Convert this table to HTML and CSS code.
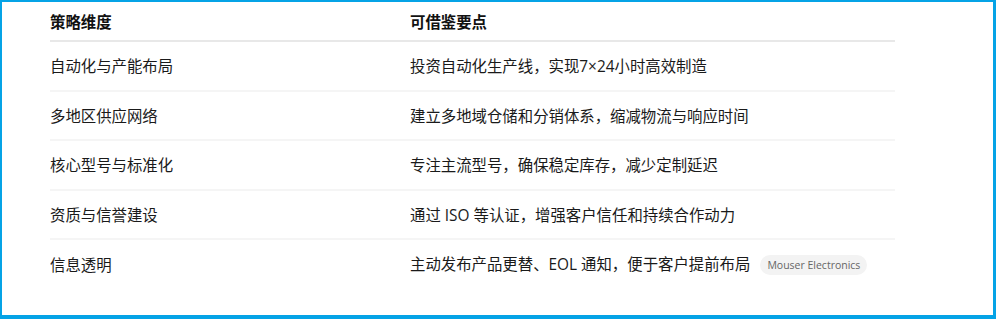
FILE: index.html
```html
<!DOCTYPE html>
<html lang="zh">
<head>
<meta charset="utf-8">
<link rel="stylesheet" href="styles.css">
</head>
<body>
<div class="frame">
  <table class="tbl">
    <thead>
      <tr><th class="c1">策略维度</th><th>可借鉴要点</th></tr>
    </thead>
    <tbody>
      <tr><td class="c1">自动化与产能布局</td><td>投资自动化生产线，实现7×24小时高效制造</td></tr>
      <tr><td class="c1">多地区供应网络</td><td>建立多地域仓储和分销体系，缩减物流与响应时间</td></tr>
      <tr><td class="c1">核心型号与标准化</td><td>专注主流型号，确保稳定库存，减少定制延迟</td></tr>
      <tr><td class="c1">资质与信誉建设</td><td>通过 ISO 等认证，增强客户信任和持续合作动力</td></tr>
      <tr class="last"><td class="c1">信息透明</td><td>主动发布产品更替、EOL 通知，便于客户提前布局<span class="badge">Mouser Electronics</span></td></tr>
    </tbody>
  </table>
</div>
</body>
</html>
```
FILE: styles.css
```css
html, body {
  margin: 0;
  padding: 0;
  background: #ffffff;
}
.frame {
  box-sizing: border-box;
  width: 996px;
  height: 319px;
  border-style: solid;
  border-color: #05a3e6;
  border-width: 2px 3px 4px 2px;
  padding: 0 0 0 48px;
  font-family: "Open Sans", "Noto Sans CJK SC", sans-serif;
  color: #1a1a1a;
}
.tbl {
  width: 845px;
  border-collapse: collapse;
  font-size: 15.4px;
}
.tbl th, .tbl td {
  text-align: left;
  padding: 0;
  vertical-align: middle;
}
.tbl th {
  font-weight: 700;
  height: 38px;
  border-bottom: 2px solid #e8e8e8;
  color: #111;
}
.tbl td {
  height: 47.6px;
  border-bottom: 2px solid #f5f5f5;
}
.tbl tr.last td {
  border-bottom: none;
}
.c1 {
  width: 360px;
}
.badge {
  display: inline-block;
  margin-left: 10px;
  padding: 0 7px;
  height: 20px;
  line-height: 20px;
  border-radius: 10px;
  background: #f3f3f3;
  color: #666;
  font-size: 10.5px;
  vertical-align: middle;
  position: relative;
  top: -1px;
}
```
